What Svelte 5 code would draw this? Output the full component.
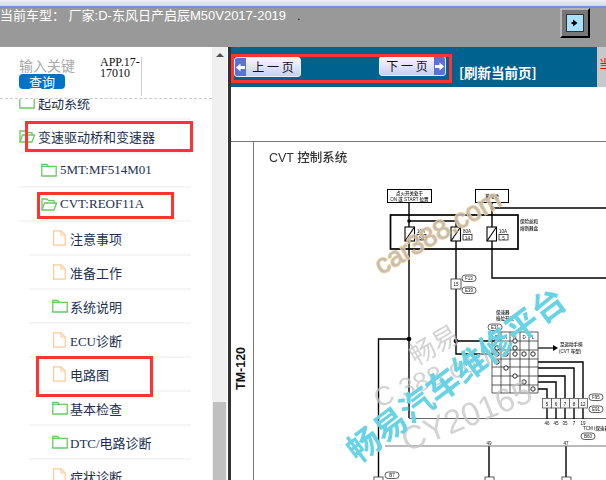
<script>
  const tree = [
    { label: '起动系统', level: 1, icon: 'folder' },
    { label: '变速驱动桥和变速器', level: 1, icon: 'open' },
    { label: '5MT:MF514M01', level: 2, icon: 'folder' },
    { label: 'CVT:REOF11A', level: 2, icon: 'open' },
    { label: '注意事项', level: 3, icon: 'file' },
    { label: '准备工作', level: 3, icon: 'file' },
    { label: '系统说明', level: 3, icon: 'folder' },
    { label: 'ECU诊断', level: 3, icon: 'file' },
    { label: '电路图', level: 3, icon: 'file' },
    { label: '基本检查', level: 3, icon: 'folder' },
    { label: 'DTC/电路诊断', level: 3, icon: 'folder' },
    { label: '症状诊断', level: 3, icon: 'file' }
  ];

  // switch grid contacts, page coordinates
  const contacts = [
    [497, 339], [497, 348], [497, 354], [497, 362],
    [506, 354], [506, 368],
    [515, 341], [515, 348], [515, 354], [515, 376],
    [524, 354], [524, 382],
    [533, 354], [533, 389]
  ];
  const gridX = [492, 501, 510, 520, 529, 538];
  const gridY = [332, 341, 350, 359, 367, 376, 385, 393];
  const outWires = [
    'M538 362H583V398', 'M538 368H574V398', 'M538 376H565V398',
    'M538 382H556V398', 'M538 389H547V398'
  ];
  const pins = [
    { x: 547, top: '5', bottom: '46' },
    { x: 556, top: '6', bottom: '45' },
    { x: 565, top: '7', bottom: '35' },
    { x: 574, top: '8', bottom: '7' },
    { x: 583, top: '12', bottom: '19' }
  ];
  const fuses = [
    { x: 405, a: '10A', b: '54' },
    { x: 451, a: '80A', b: '14' },
    { x: 487, a: '10A', b: '5' }
  ];
  const ovals = [
    { x: 462, y: 275, t: 'F13' }, { x: 462, y: 287, t: 'E39' },
    { x: 488, y: 324, t: 'E31' }, { x: 589, y: 394, t: 'F95' },
    { x: 589, y: 406, t: 'E91' }, { x: 581, y: 433, t: 'B60' },
    { x: 385, y: 472, t: 'B7' }
  ];
</script>

<div class="page">
  <div class="top-strip"></div>

  <header class="model-bar">
    <span class="model">当前车型： 厂家:D-东风日产启辰M50V2017-2019</span>
    <span class="dot">.</span>
    <button class="toggle" aria-label="toggle">
      <span class="toggle-face">
        <svg width="10" height="10" viewBox="0 0 10 10"><path d="M3 1.5 7.5 5 3 8.5Z" fill="#000" /><rect x="1.5" y="4" width="2" height="2" /></svg>
      </span>
    </button>
  </header>

  <div class="body">
    <aside class="side">
      <div class="side-scroll">
        <div class="search">
          <div class="search-left">
            <div class="keyword">输入关键字</div>
            <button class="query">查询</button>
          </div>
          <div class="app-code">APP.17-<br />17010</div>
        </div>

        <div class="tree">
          {#each tree as node}
            <div class="node level{node.level}">
              <span class="icon">
                {#if node.icon === 'file'}
                  <svg width="14" height="16" viewBox="0 0 14 16" fill="none" stroke="#fccb94" stroke-width="1.2">
                    <path d="M1.6 .8H9L13.2 5V15.2H1.6Z" /><path d="M9 .8V5H13.2" />
                  </svg>
                {:else if node.icon === 'open'}
                  <svg width="16" height="14" viewBox="0 0 16 14" fill="none" stroke="#6cc865" stroke-width="1.3">
                    <path d="M1 13V2H6L7.5 3.6H13V6" /><path d="M1 13 3.5 6H15.5L13 13Z" />
                  </svg>
                {:else}
                  <svg width="16" height="14" viewBox="0 0 16 14" fill="none" stroke="#6cc865" stroke-width="1.3">
                    <path d="M.8 13V1.5H6L7.2 3.4H15.2V13Z" /><path d="M.8 3.4H7.2" />
                  </svg>
                {/if}
              </span>
              <span class="label">{node.label}</span>
            </div>
          {/each}
        </div>
      </div>

      <div class="scrollbar">
        <span class="arrow-up"></span>
        <span class="thumb"></span>
      </div>

      <div class="mark mark-bridge"></div>
      <div class="mark mark-cvt"></div>
      <div class="mark mark-circuit"></div>
    </aside>

    <main class="doc">
      <div class="nav-row">
        <div class="nav-bar">
          <button class="page-btn prev">
            <span class="cap">
              <svg width="9" height="9" viewBox="0 0 9 9"><path d="M0 4.5 4.5 .5V3H9V6H4.5V8.5Z" fill="#fff" /></svg>
            </span>
            <span class="page-text">上 一 页</span>
          </button>
          <button class="page-btn next">
            <span class="page-text">下 一 页</span>
            <span class="cap">
              <svg width="9" height="9" viewBox="0 0 9 9"><path d="M9 4.5 4.5 .5V3H0V6H4.5V8.5Z" fill="#fff" /></svg>
            </span>
          </button>
          <span class="refresh">[刷新当前页]</span>
        </div>
        <div class="nav-side">当</div>
        <div class="mark mark-nav"></div>
      </div>

      <svg class="sheet" viewBox="231 87 375 393" width="375" height="393">
        <defs>
          <filter id="soft" x="-5%" y="-5%" width="110%" height="110%"><feGaussianBlur stdDeviation="0.45" /></filter>
          <filter id="softer" x="-5%" y="-5%" width="110%" height="110%"><feGaussianBlur stdDeviation="0.3" /></filter>
        </defs>

        <path d="M231 141.500H606" stroke="#777" stroke-width="1" />
        <path d="M253.500 141V480" stroke="#777" stroke-width="1" />
        <text class="side-tag" transform="translate(244.500 390) rotate(-90)">TM-120</text>

        <g filter="url(#soft)">
          <text class="sheet-title" x="269" y="162">CVT 控制系统</text>

          <g fill="none" stroke="#000">
            <rect x="387.500" y="189.500" width="44" height="13" />
            <rect x="475.500" y="189.500" width="33" height="13" />
            <rect x="390.500" y="215" width="127.500" height="34" stroke-width="1.700" />
            <path d="M409 202V227M409 241V418" stroke-width="1.400" />
            <path d="M409 221H456V227M456 241V354H497M456 341H497" stroke-width="1.400" />
            <path d="M492 202V227M492 241V278H606M492 208H606" stroke-width="1.400" />
            <path d="M409 339H378.500V480" stroke-width="1.400" />
            <path d="M489 446V480M566 446V480" stroke-width="1.400" />
            <path d="M409 418.500H606" stroke="#555" stroke-width=".9" />
            <path d="M385 446H606" stroke="#666" stroke-width=".9" />
            <path d="M538 348H553" stroke-width="1.200" />
            {#each outWires as w}<path d={w} stroke-width="1.400" />{/each}
            {#each pins as p}<path d="M{p.x} 408V419" stroke-width="1.400" />{/each}
          </g>

          <path d="M553 345 558 348 553 351Z" fill="#000" />
          <circle cx="409" cy="221" r="1.800" fill="#000" />
          <circle cx="492" cy="208" r="1.800" fill="#000" />
          <circle cx="409" cy="339" r="2.300" fill="#000" />
          <circle cx="456" cy="341" r="2.300" fill="#000" />

          {#each fuses as f}
            <rect x={f.x} y="227" width="9.500" height="14" fill="#fff" stroke="#000" stroke-width="1.100" />
            <path d="M{f.x} 241 {f.x + 9.5} 227" stroke="#000" stroke-width="1.100" />
            <text class="tiny" x={f.x + 12} y="233">{f.a}</text>
            <rect x={f.x + 12} y="234.500" width="9" height="5.500" fill="none" stroke="#222" stroke-width=".8" />
            <text class="tiny" x={f.x + 16.500} y="239.500" text-anchor="middle">{f.b}</text>
          {/each}

          <text class="tiny" x="409.500" y="195" text-anchor="middle">点火开关处于</text>
          <text class="tiny" x="409.500" y="201" text-anchor="middle">ON 或 START 位置</text>
          <text class="tiny" x="492" y="198" text-anchor="middle">蓄电池</text>
          <text class="tiny" x="520" y="223">保险丝和</text>
          <text class="tiny" x="520" y="230">熔断器盒</text>

          <rect x="451" y="279" width="10" height="10" fill="#fff" stroke="#333" stroke-width=".8" />
          <text class="tiny" x="456" y="286" text-anchor="middle">15</text>

          <text class="tiny" x="496" y="314">保速器</text>
          <text class="tiny" x="496" y="320">档位开关</text>

          <g stroke="#333" stroke-width=".8">
            {#each gridX as x}<path d="M{x} 332V393" />{/each}
            {#each gridY as y}<path d="M492 {y}H538" />{/each}
          </g>
          {#each ['P', 'R', 'N', 'D', 'L'] as letter, i}
            <text class="tiny" x={496.500 + i * 9.2} y="338.500" text-anchor="middle">{letter}</text>
          {/each}
          {#each contacts as c}
            <circle cx={c[0]} cy={c[1]} r="2.200" fill="#fff" stroke="#111" stroke-width=".9" />
          {/each}

          <text class="tiny" x="560" y="346">至运动手柄</text>
          <text class="tiny" x="559" y="353">(CVT 车型)</text>

          {#each pins as p}
            <rect x={p.x - 4.500} y="398.500" width="9" height="9.500" fill="#f4f4f4" stroke="#555" stroke-width=".8" />
            <text class="tiny" x={p.x} y="405.500" text-anchor="middle">{p.top}</text>
            <text class="tiny" x={p.x} y="425" text-anchor="middle">{p.bottom}</text>
          {/each}
          <text class="tiny" x="583" y="430">TCM (保速器</text>
          <text class="tiny" x="489" y="445" text-anchor="middle">49</text>
          <text class="tiny" x="566" y="445" text-anchor="middle">47</text>

          {#each ovals as o}
            <rect x={o.x} y={o.y} width="14" height="6.500" rx="3.200" fill="#fff" stroke="#333" stroke-width=".8" />
            <text class="tiny" x={o.x + 7} y={o.y + 5} text-anchor="middle">{o.t}</text>
          {/each}

          <rect x="374" y="477" width="9" height="6" fill="#fff" stroke="#333" stroke-width=".8" />
          <rect x="485" y="477" width="9" height="6" fill="#fff" stroke="#333" stroke-width=".8" />
          <rect x="562" y="477" width="9" height="6" fill="#fff" stroke="#333" stroke-width=".8" />
        </g>

        <!-- watermarks -->
        <g filter="url(#softer)">
          <text class="wm-gray" transform="translate(416 366) rotate(-30)" font-size="26">畅易</text>
          <text class="wm-gray" transform="translate(378 408) rotate(-21)" font-size="27">C 388.com</text>
          <text class="wm-gray" transform="translate(407 452) rotate(-22)" font-size="33">CY20165</text>
          <text class="wm-gold" transform="translate(381 275) rotate(-30)" font-size="27">car388.com</text>
          <text class="wm-cyan" transform="translate(358 464) rotate(-37)" font-size="33">畅易汽车维修平台</text>
        </g>
      </svg>
    </main>
  </div>
</div>

<style>
  :global(body) {
    margin: 0;
    background: #fff;
  }

  .page {
    position: relative;
    width: 606px;
    height: 480px;
    overflow: hidden;
    font-family: "Liberation Sans", "Noto Sans CJK SC", sans-serif;
  }

  .top-strip {
    height: 8px;
    box-sizing: border-box;
    background: linear-gradient(#eef1fa, #cdd8f2);
    border-bottom: 2px solid #7391d8;
  }

  .model-bar {
    height: 39px;
    background: #999;
    display: flex;
    align-items: flex-start;
    color: #fff;
    font-size: 13px;
    line-height: 15px;
  }

  .model {
    white-space: nowrap;
  }

  .dot {
    margin-left: 11px;
    color: #222;
  }

  .toggle {
    margin: 0 16px 0 auto;
    width: 30px;
    height: 30px;
    padding: 4px;
    box-sizing: border-box;
    background: #777;
    border: 2px solid;
    border-color: #b5b5b5 #000 #000 #b5b5b5;
    display: flex;
  }

  .toggle-face {
    flex: 1;
    background: #a8e2ff;
    border: 1px solid #333;
    display: flex;
    align-items: center;
    justify-content: center;
  }

  .body {
    display: flex;
    height: 433px;
  }

  .side {
    position: relative;
    width: 228px;
    flex: none;
    display: flex;
    background: #fff;
    overflow: hidden;
    border-right: 3px solid #333;
  }

  .side-scroll {
    width: 212px;
    flex: none;
  }

  .search {
    height: 52px;
    box-sizing: border-box;
    padding: 10px 0 0 19px;
    display: flex;
    border-bottom: 1px dashed #ccc;
  }

  .search-left {
    width: 56px;
    overflow: hidden;
    white-space: nowrap;
  }

  .keyword {
    color: #a9a9a9;
    font-size: 14px;
    line-height: 15px;
    padding-top: 2px;
  }

  .query {
    display: block;
    width: 46px;
    height: 15px;
    padding: 0;
    border: 0;
    border-radius: 4px;
    background: #0073c6;
    color: #fff;
    font: 13px/15px "Noto Sans CJK SC", sans-serif;
  }

  .app-code {
    margin-left: 25px;
    width: 41px;
    height: 39px;
    border-right: 1px solid #ccc;
    font: 12px/11px "Liberation Serif", "Noto Sans CJK SC", serif;
    color: #111;
    white-space: nowrap;
  }

  .tree {
    height: 381px;
    overflow: hidden;
  }

  .node {
    height: 34px;
    box-sizing: border-box;
    margin-right: 21px;
    display: flex;
    align-items: center;
    color: #22304f;
    font-family: "Liberation Serif", "Noto Sans CJK SC", serif;
    font-size: 13px;
    border-bottom: 2px solid #f5f5f5;
    white-space: nowrap;
  }

  .node:first-child {
    margin-top: -13px;
  }

  .level1 {
    margin-left: 19px;
  }

  .level1 .icon {
    width: 19px;
  }

  .level2 {
    margin-left: 19px;
    padding-left: 22px;
  }

  .level2 .icon {
    width: 19px;
  }

  .level3 {
    margin-left: 29px;
    padding-left: 23px;
  }

  .level3 .icon {
    width: 18px;
  }

  .icon {
    display: flex;
    flex: none;
  }

  .scrollbar {
    position: relative;
    width: 15px;
    background: #f0f0f0;
    display: flex;
    justify-content: center;
  }

  .arrow-up {
    margin-top: 6px;
    width: 0;
    height: 0;
    border: 4px solid transparent;
    border-top: 0;
    border-bottom: 4px solid #505050;
  }

  .thumb {
    position: absolute;
    left: 1px;
    right: 1px;
    top: 355px;
    bottom: 0;
    background: #c0c0c0;
  }

  .mark {
    position: absolute;
    box-sizing: border-box;
    border: 3px solid #ff3333;
    pointer-events: none;
  }

  .mark-bridge {
    left: 25px;
    top: 74px;
    width: 168px;
    height: 31px;
  }

  .mark-cvt {
    left: 37px;
    top: 145px;
    width: 137px;
    height: 27px;
  }

  .mark-circuit {
    left: 36px;
    top: 309px;
    width: 117px;
    height: 41px;
  }

  .doc {
    flex: 1;
    min-width: 0;
    background: #fff;
  }

  .nav-row {
    position: relative;
    height: 40px;
    display: flex;
  }

  .nav-bar {
    flex: 1;
    background: #00628f;
    position: relative;
    display: flex;
    align-items: flex-start;
  }

  .nav-side {
    width: 9px;
    background: #c8c8c8;
    color: #f00;
    font-size: 12px;
    line-height: 14px;
    padding: 11px 0 0 2px;
    box-sizing: border-box;
    overflow: hidden;
  }

  .mark-nav {
    left: 0;
    top: 7px;
    width: 221px;
    height: 29px;
  }

  .page-btn {
    height: 20px;
    width: 67px;
    padding: 0;
    display: flex;
    align-items: stretch;
    background: linear-gradient(#f6f7ff, #c9cff4);
    border: 1px solid #e8ecff;
    border-radius: 3px;
    font: 12px/18px "Noto Sans CJK SC", sans-serif;
    color: #111;
    overflow: hidden;
  }

  .prev {
    margin: 10px 0 0 3px;
  }

  .next {
    margin: 9px 0 0 78px;
  }

  .cap {
    width: 11px;
    flex: none;
    background: #5a72d8;
    display: flex;
    align-items: center;
    justify-content: center;
  }

  .page-text {
    flex: 1;
    text-align: center;
    white-space: nowrap;
  }

  .refresh {
    margin: 16px 0 0 13px;
    color: #fff;
    font: bold 13.500px/18px "Noto Sans CJK SC", sans-serif;
    white-space: nowrap;
  }

  .sheet {
    display: block;
  }

  .side-tag {
    font: bold 12.500px "Liberation Sans", sans-serif;
    fill: #111;
  }

  .sheet-title {
    font: 500 12.500px "Liberation Sans", "Noto Sans CJK SC", sans-serif;
    fill: #333;
  }

  .tiny {
    font: 500 4.500px "Liberation Sans", "Noto Sans CJK SC", sans-serif;
    fill: #111;
  }

  .wm-gray {
    font-family: "Liberation Sans", "Noto Sans CJK SC", sans-serif;
    fill: #c4c4c4;
    opacity: .75;
  }

  .wm-gold {
    font-family: "Liberation Sans", sans-serif;
    fill: #bdb5b8;
    stroke: #f2cf8a;
    stroke-width: 1.800;
    paint-order: stroke;
    stroke-linejoin: round;
    opacity: .9;
  }

  .wm-cyan {
    font-family: "Noto Sans CJK SC", sans-serif;
    font-weight: 700;
    fill: #68d3e4;
  }
</style>
